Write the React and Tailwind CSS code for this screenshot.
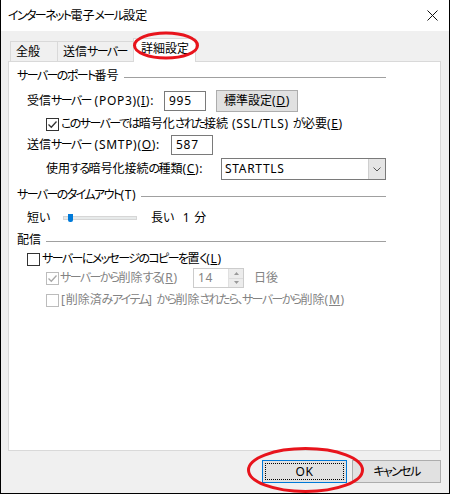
const font = "font-['Noto_Sans','Noto_Sans_CJK_JP',sans-serif] [font-feature-settings:'palt']"

// Splits a label into ASCII, kana and kanji runs; kana are packed tighter to
// match the narrow Meiryo UI kana. "&X" marks an underlined access key.
function T({ s }) {
  const parts = s.split(/([\x00-\x7F]+|[\u3001\u3040-\u30ff]+)/).filter(Boolean)
  return parts.map((p, i) => {
    if (/^[\x00-\x7F]+$/.test(p)) {
      const bits = p.split(/&(.)/)
      return (
        <span key={i} className="whitespace-pre">
          {bits.map((b, j) => (j % 2 ? <u key={j}>{b}</u> : b))}
        </span>
      )
    }
    if (/^[\u3001\u3040-\u30ff]+$/.test(p)) {
      return (
        <span key={i} className="tracking-[-1.6px]">
          {p}
        </span>
      )
    }
    return (
      <span key={i} className="tracking-normal">
        {p}
      </span>
    )
  })
}

function Check({ checked, disabled }) {
  return (
    <div
      className={`w-[13px] h-[13px] shrink-0 border bg-white flex items-center justify-center ${
        disabled ? 'border-[#bcbcbc]' : 'border-[#333333]'
      }`}
    >
      {checked && (
        <svg width="11" height="11" viewBox="0 0 11 11" fill="none">
          <path
            d="M1.5 5.5l2.8 2.8L9.5 2.5"
            stroke={disabled ? '#a8a8a8' : '#333333'}
            strokeWidth="1.3"
          />
        </svg>
      )}
    </div>
  )
}

function Section({ label, className = '' }) {
  return (
    <div className={`flex items-center h-[16px] ${className}`}>
      <span>
        <T s={label} />
      </span>
      <div className="flex-1 h-px bg-[#a0a0a0] ml-[5px] mt-[2px]" />
    </div>
  )
}

function TextBox({ value }) {
  return (
    <div className="w-[42px] h-[20px] border border-[#7a7a7a] bg-white flex items-center pl-[4px]">
      {value}
    </div>
  )
}

export default function App() {
  return (
    <div
      className={`relative w-[450px] h-[494px] bg-[#f0f0f0] border-x border-b border-black flex flex-col overflow-hidden text-[12px] text-black leading-none tracking-[0.7px] whitespace-nowrap ${font}`}
    >
      {/* Title bar */}
      <div className="h-[31px] bg-white flex items-center justify-between pl-[7px] pr-[11px] shrink-0">
        <span>
          <T s="インターネット電子メール設定" />
        </span>
        <svg width="11" height="11" viewBox="0 0 11 11">
          <path d="M0.5 0.5l10 10M10.5 0.5l-10 10" stroke="#111" strokeWidth="1" />
        </svg>
      </div>

      <div className="pl-[7px] pr-[8px] flex flex-col">
        {/* Tabs */}
        <div className="h-[30px] flex items-end pl-[2px]">
          <div className="w-[48px] h-[20px] border-l border-t border-r border-[#d9d9d9] flex items-center pl-[5px]">
            <T s="全般" />
          </div>
          <div className="w-[76px] h-[20px] border-t border-r border-[#d9d9d9] flex items-center pl-[5px]">
            <T s="送信サーバー" />
          </div>
          <div className="relative z-10 -ml-px -mb-px w-[63px] h-[24px] border-l border-t border-r border-[#d9d9d9] bg-white flex items-center pl-[7px] pb-[3px]">
            <T s="詳細設定" />
          </div>
        </div>

        {/* Panel */}
        <div className="h-[390px] border border-[#d9d9d9] bg-white pl-[8px] pt-[6px]">
          <div className="w-[369px] flex flex-col">
            <Section label="サーバーのポート番号" />

            <div className="flex items-center h-[22px] mt-[6px] pl-[10px]">
              <div className="w-[137px]">
                <T s="受信サーバー (POP3)(&I):" />
              </div>
              <TextBox value="995" />
              <div className="ml-[10px] w-[82px] h-[22px] bg-[#e1e1e1] border border-[#adadad] flex items-center justify-center">
                <T s="標準設定(&D)" />
              </div>
            </div>

            <div className="flex items-center h-[16px] mt-[4px] pl-[29px]">
              <Check checked />
              <span className="ml-[2px]">
                <T s="このサーバーでは暗号化された接続 (SSL/TLS) が必要(&E)" />
              </span>
            </div>

            <div className="flex items-center h-[20px] mt-[3px] pl-[10px]">
              <div className="w-[144px]">
                <T s="送信サーバー (SMTP)(&O):" />
              </div>
              <TextBox value="587" />
            </div>

            <div className="flex items-center h-[22px] mt-[3px] pl-[29px]">
              <div className="w-[175px]">
                <T s="使用する暗号化接続の種類(&C):" />
              </div>
              <div className="w-[165px] h-[22px] border border-[#7a7a7a] bg-white flex items-center">
                <span className="flex-1 pl-[3px]">STARTTLS</span>
                <div className="w-[17px] h-[20px] bg-[#e5e5e5] border-l border-[#cfcfcf] flex items-center justify-center">
                  <svg width="8" height="5" viewBox="0 0 8 5" fill="none">
                    <path d="M0.5 0.5l3.5 3.5 3.5-3.5" stroke="#555" strokeWidth="1" />
                  </svg>
                </div>
              </div>
            </div>

            <Section label="サーバーのタイムアウト(T)" className="mt-[7px]" />

            <div className="flex items-center h-[16px] mt-[7px] pl-[10px]">
              <div className="w-[36px]">
                <T s="短い" />
              </div>
              <div className="relative w-[74px] h-[4px] bg-[#e7eaea] border border-[#d6d6d6]">
                <div className="absolute left-[4px] -top-[3px] w-[5px] h-[8px] bg-[#007ad9] rounded-b-[2px]" />
              </div>
              <span className="ml-[14px]">
                <T s="長い" />
              </span>
              <span className="ml-[10px]">
                <T s="1 分" />
              </span>
            </div>

            <Section label="配信" className="mt-[6px]" />

            <div className="flex items-center h-[16px] mt-[3px] pl-[10px]">
              <Check />
              <span className="ml-[2px]">
                <T s="サーバーにメッセージのコピーを置く(&L)" />
              </span>
            </div>

            <div className="flex items-center h-[20px] mt-[1px] pl-[29px] text-[#838383]">
              <Check checked disabled />
              <span className="ml-[1px] w-[133px]">
                <T s="サーバーから削除する(&R)" />
              </span>
              <div className="w-[51px] h-[20px] border border-[#cccccc] bg-white flex items-center">
                <span className="flex-1 pl-[4px]">14</span>
                <div className="w-[15px] h-[18px] flex flex-col border-l border-[#e0e0e0]">
                  <div className="flex-1 bg-[#ececec] flex items-center justify-center border-b border-[#dcdcdc]">
                    <svg width="5" height="3" viewBox="0 0 5 3">
                      <path d="M0 3L2.5 0 5 3z" fill="#9a9a9a" />
                    </svg>
                  </div>
                  <div className="flex-1 bg-[#ececec] flex items-center justify-center">
                    <svg width="5" height="3" viewBox="0 0 5 3">
                      <path d="M0 0L2.5 3 5 0z" fill="#9a9a9a" />
                    </svg>
                  </div>
                </div>
              </div>
              <span className="ml-[10px]">
                <T s="日後" />
              </span>
            </div>

            <div className="flex items-center h-[16px] mt-[4px] pl-[29px] text-[#838383]">
              <Check disabled />
              <span className="ml-[2px]">
                <T s="[削除済みアイテム] から削除されたら、サーバーから削除(&M)" />
              </span>
            </div>
          </div>
        </div>

        {/* Buttons */}
        <div className="flex justify-end gap-[5px] mt-[9px]">
          <div className="w-[85px] h-[23px] bg-[#e1e1e1] border border-[#0078d7] p-[2px]">
            <div className="w-full h-full border border-dotted border-black flex items-center justify-center">
              OK
            </div>
          </div>
          <div className="w-[89px] h-[23px] bg-[#e1e1e1] border border-[#adadad] flex items-center justify-center">
            <T s="キャンセル" />
          </div>
        </div>
      </div>

      {/* Red annotation ellipses */}
      <svg
        className="absolute z-20 -left-px top-0 pointer-events-none"
        width="450"
        height="494"
        viewBox="0 0 450 494"
        fill="none"
      >
        <ellipse cx="166" cy="45.5" rx="31.5" ry="12.5" stroke="#e8141c" strokeWidth="3" />
        <ellipse cx="305.5" cy="470" rx="57" ry="21.5" stroke="#e8141c" strokeWidth="3" />
      </svg>
    </div>
  )
}
